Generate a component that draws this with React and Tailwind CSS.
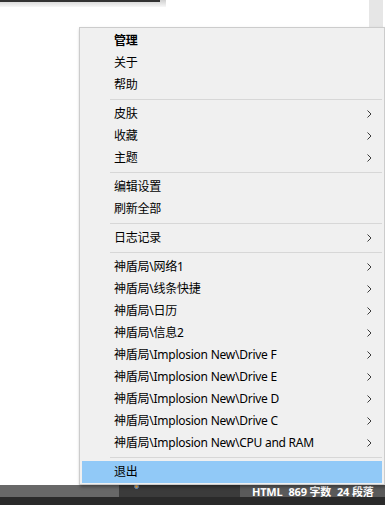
const groups = [
  [
    { label: "管理", bold: true },
    { label: "关于" },
    { label: "帮助" },
  ],
  [
    { label: "皮肤", sub: true },
    { label: "收藏", sub: true },
    { label: "主题", sub: true },
  ],
  [{ label: "编辑设置" }, { label: "刷新全部" }],
  [{ label: "日志记录", sub: true }],
  [
    { label: "神盾局\\网络1", sub: true },
    { label: "神盾局\\线条快捷", sub: true },
    { label: "神盾局\\日历", sub: true },
    { label: "神盾局\\信息2", sub: true },
    { label: "神盾局\\Implosion New\\Drive F", sub: true },
    { label: "神盾局\\Implosion New\\Drive E", sub: true },
    { label: "神盾局\\Implosion New\\Drive D", sub: true },
    { label: "神盾局\\Implosion New\\Drive C", sub: true },
    { label: "神盾局\\Implosion New\\CPU and RAM", sub: true },
  ],
  [{ label: "退出", active: true }],
];

function Chevron() {
  return (
    <svg width="5" height="8" viewBox="0 0 5 8" className="shrink-0">
      <polyline points="0.5,0.5 4,4 0.5,7.5" fill="none" stroke="#3a3a3a" strokeWidth="1" />
    </svg>
  );
}

function MenuItem({ item }) {
  return (
    <div
      className={
        "h-[22px] flex items-center pl-[32px] pr-[10px] text-[12px] text-black tracking-[-0.25px] " +
        (item.active ? "bg-[#91c9f7]" : "")
      }
    >
      <span className={"flex-1 leading-none whitespace-nowrap " + (item.bold ? "font-bold" : "")}>{item.label}</span>
      {item.sub && <Chevron />}
    </div>
  );
}

export default function App() {
  return (
    <div
      className="relative w-[385px] h-[505px] bg-white overflow-hidden flex flex-col"
      style={{ fontFamily: '"Noto Sans", "Noto Sans CJK SC", sans-serif' }}
    >
      {/* window behind */}
      <div className="flex-1 flex items-start">
        <div className="w-[166px] h-[7px] bg-gradient-to-b from-[#d0d0d0] to-[#f8f8f8]">
          <div className="w-[160px] h-[2px] bg-[#333333]"></div>
        </div>
        <div className="flex-1"></div>
        <div className="w-[14px] h-[27px] bg-[#e6e6e6]"></div>
        <div className="w-[2px]"></div>
      </div>

      {/* taskbar */}
      <div className="h-[12px] flex">
        <div className="w-[119px] bg-[#686868]"></div>
        <div className="w-[121px] bg-[#3b3b3b] relative">
          <div className="absolute left-[15px] top-[-1px] w-[5px] h-[5px] rounded-full bg-[#e4a64a] border border-[#5b8fd0]"></div>
        </div>
        <div className="flex-1 bg-[#5a5a5a] flex items-center pl-[12px] gap-[6px] text-white text-[11px] font-bold leading-none whitespace-nowrap tracking-[-0.2px]">
          <span>HTML</span>
          <span>869 字数</span>
          <span>24 段落</span>
        </div>
      </div>
      <div className="h-[8px] bg-[#2a2a2a]"></div>

      {/* context menu */}
      <div className="absolute left-[79px] top-[27px] w-[306px] bg-[#f0f0f0] border border-[#cccccc] px-[2px] pt-[2px] pb-[1px] shadow-[1px_2px_3px_rgba(0,0,0,0.35)]">
        {groups.map((g, gi) => (
          <div key={gi}>
            {gi > 0 && (
              <div className="h-[7px] pl-[28px] pt-[3px]">
                <div className="h-[1px] bg-[#d7d7d7]"></div>
              </div>
            )}
            {g.map((item) => (
              <MenuItem key={item.label} item={item} />
            ))}
          </div>
        ))}
      </div>
    </div>
  );
}
